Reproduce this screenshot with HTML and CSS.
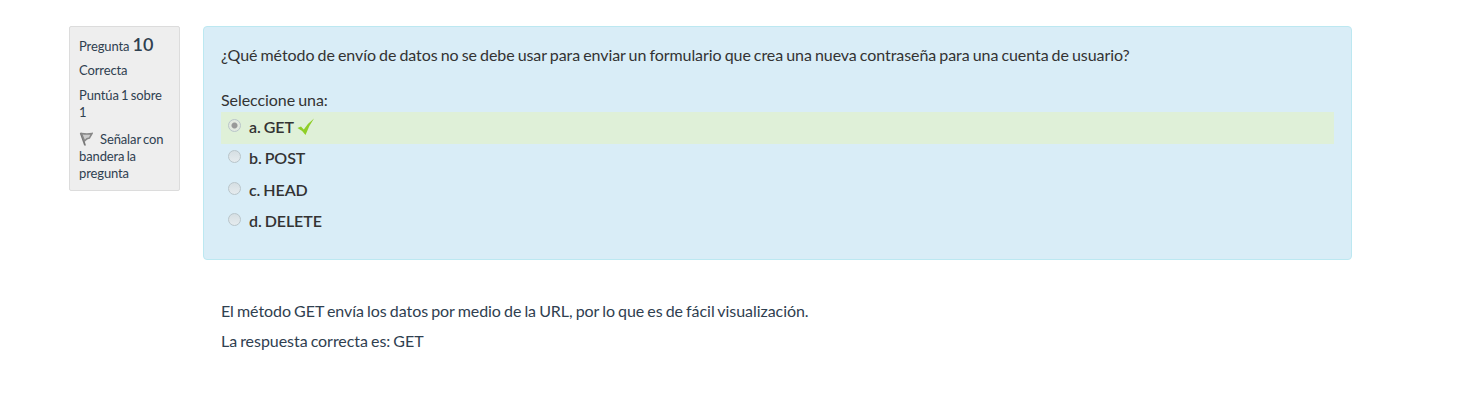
FILE: index.html
```html
<!DOCTYPE html>
<html lang="es">
<head>
<meta charset="utf-8">
<title>Pregunta 10</title>
<link rel="stylesheet" href="styles.css">
</head>
<body>
<main class="question">
  <aside class="info">
    <h3 class="number">Pregunta <span class="qno">10</span></h3>
    <div class="state">Correcta</div>
    <div class="grade">Puntúa 1 sobre 1</div>
    <div class="flag"><svg class="flag-icon" viewBox="0 0 14 15" width="14" height="15"><path d="M0.800 1.300L2.800 0.800L7 13.500H5.200Z" fill="#777"/><path d="M2.500 1.500Q8 2.500 13 1.500Q11.500 4 10.500 6Q8 6 5.500 9Z" fill="#ccc" stroke="#888" stroke-width="1.500"/></svg>Señalar con bandera la pregunta</div>
  </aside>
  <div class="content">
    <section class="formulation">
      <p class="qtext">¿Qué método de envío de datos no se debe usar para enviar un formulario que crea una nueva contraseña para una cuenta de usuario?</p>
      <div class="prompt">Seleccione una:</div>
      <div class="answers">
        <div class="option correct"><span class="radio checked"></span><span class="label">a. GET</span><svg class="tick" viewBox="0 0 18 18" width="18" height="18"><path d="M0.500 10L4 8.500L6.800 11.500Q11 5 17 0.500Q11.500 8 8.500 17Q5 12 0.500 10Z" fill="#8fce28"/></svg></div>
        <div class="option"><span class="radio"></span><span class="label">b. POST</span></div>
        <div class="option"><span class="radio"></span><span class="label">c. HEAD</span></div>
        <div class="option"><span class="radio"></span><span class="label">d. DELETE</span></div>
      </div>
    </section>
    <section class="feedback">
      <p>El método GET envía los datos por medio de la URL, por lo que es de fácil visualización.</p>
      <p>La respuesta correcta es: GET</p>
    </section>
  </div>
</main>
</body>
</html>
```
FILE: styles.css
```css
* { box-sizing: border-box; }
body { margin: 0; background: #fff; color: #333; font: 16px/20px Lato, sans-serif; letter-spacing: -0.065px; word-spacing: -0.940px; }
.question { display: flex; align-items: flex-start; gap: 23px; padding: 26px 115px 0 69px; }
.info { width: 111px; height: 165px; padding: 8px 9px; background: #eee; border: 1px solid #dcdcdc; border-radius: 2px; color: #2f4050; font-size: 13px; line-height: 17px; letter-spacing: -0.120px; }
.number { margin: 0; font-size: 13px; font-weight: 400; line-height: 18px; word-spacing: 0; }
.qno { font-size: 18px; font-weight: 600; }
.state { margin-top: 7px; }
.grade { margin-top: 8px; }
.flag { margin-top: 10px; }
.flag-icon { margin-right: 7px; vertical-align: -3px; }
.content { flex: 1; }
.formulation { height: 234px; padding: 18px 17px 0; background: #d9edf7; border: 1px solid #bce8f1; border-radius: 4px; }
.qtext { margin: 0 0 25px; white-space: nowrap; }
.prompt { height: 22px; }
.option { display: flex; align-items: center; height: 32px; padding: 0 0 2px 7px; font-weight: 600; }
.option:nth-child(2) { height: 30px; margin-bottom: 1px; }
.option:last-child { height: 30px; }
.correct { background: #dff0d8; }
.radio { width: 13px; height: 13px; margin: 0 8px 3px 0; border: 1px solid #b9c5ca; border-radius: 50%; background: linear-gradient(#d6dfe3, #e5ebee); }
.checked { background: radial-gradient(circle, #999 0 2.500px, #e3e9e0 3.500px); }
.tick { margin-left: 3px; }
.feedback { padding: 41px 18px 0; color: #2f4050; letter-spacing: -0.050px; }
.feedback p { margin: 0 0 10px; }
```
